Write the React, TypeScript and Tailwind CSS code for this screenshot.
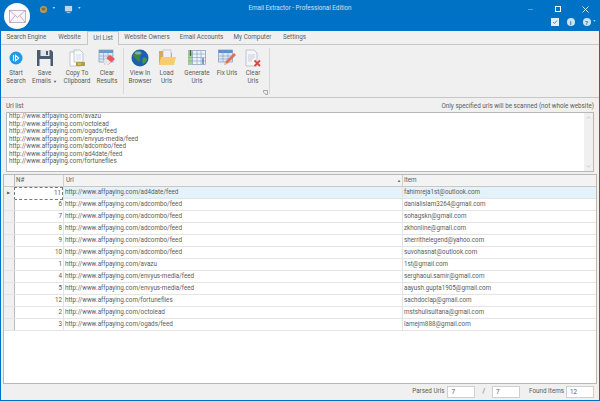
import React from "react";

const TABS = [
  { label: "Search Engine", w: "w-[51px]" },
  { label: "Website", w: "w-[35px]" },
  { label: "Url List", w: "w-[32px]", active: true },
  { label: "Website Owners", w: "w-[56px]" },
  { label: "Email Accounts", w: "w-[53px]" },
  { label: "My Computer", w: "w-[49px]" },
  { label: "Settings", w: "w-[35px]" },
];

const URLS = ["avazu", "octolead", "ogads/feed", "envyus-media/feed", "adcombo/feed", "ad4date/feed", "fortuneflies"];

const ROWS: [number, string, string][] = [
  [11, "ad4date/feed", "fahimreja1st@outlook.com"],
  [6, "adcombo/feed", "danialislam3264@gmail.com"],
  [7, "adcombo/feed", "sohagskn@gmail.com"],
  [8, "adcombo/feed", "zkhonline@gmail.com"],
  [9, "adcombo/feed", "sherrithelegend@yahoo.com"],
  [10, "adcombo/feed", "suvohasnat@outlook.com"],
  [1, "avazu", "1st@gmail.com"],
  [4, "envyus-media/feed", "serghaoui.samir@gmail.com"],
  [5, "envyus-media/feed", "aayush.gupta1905@gmail.com"],
  [12, "fortuneflies", "sachdoclap@gmail.com"],
  [2, "octolead", "mstshulisultana@gmail.com"],
  [3, "ogads/feed", "lamejm888@gmail.com"],
];

function StartIcon() {
  return (
    <svg viewBox="0 0 18 18" className="h-[18px] w-[18px]">
      <circle cx="9" cy="9" r="6.500" fill="#1e9be6" />
      <path d="M6.500 6v6M8.500 6.300l3.200 2.700-3.200 2.700z" stroke="#fff" strokeWidth="1.100" fill="none" />
    </svg>
  );
}

function SaveIcon() {
  return (
    <svg viewBox="0 0 18 18" className="h-[18px] w-[18px]">
      <path d="M1 1h14l2 2v14H1z" fill="#4a5a70" />
      <rect x="4.500" y="1" width="9" height="6" fill="#dfe4ea" />
      <rect x="10" y="2" width="2" height="4" fill="#4a5a70" />
      <rect x="3.500" y="10" width="11" height="7" fill="#eef0f3" />
    </svg>
  );
}

function CopyIcon() {
  return (
    <svg viewBox="0 0 18 18" className="h-[18px] w-[18px]">
      <path d="M2 3h8l3 3v11H2z" fill="#fff" stroke="#a9b4c0" strokeWidth=".7" />
      <path d="M6 1h6l3 3v9H6z" fill="#f6f8fa" stroke="#a9b4c0" strokeWidth=".7" />
      <path d="M8 6h5M8 8h5M8 10h5" stroke="#c6d2de" strokeWidth=".7" />
      <rect x="8" y="13" width="9" height="4" fill="#a9a24a" />
      <rect x="10" y="14" width="3" height="2" fill="#e8b93a" />
    </svg>
  );
}

function ClearResultsIcon() {
  return (
    <svg viewBox="0 0 18 18" className="h-[18px] w-[18px]">
      <rect x="1" y="1" width="14" height="12" fill="#dbe8f5" stroke="#7d9cc0" strokeWidth=".7" />
      <rect x="1" y="1" width="14" height="3" fill="#6f97c8" />
      <path d="M5.500 1v12M10 1v12M1 7h14M1 10h14" stroke="#7d9cc0" strokeWidth=".6" />
      <path d="M5 12l7-6 5 4-7 6H7z" fill="#e8565a" />
      <path d="M5 12l3-3 5 4-3 3H7z" fill="#e6e6ea" />
    </svg>
  );
}

function GlobeIcon() {
  return (
    <svg viewBox="0 0 18 18" className="h-[18px] w-[18px]">
      <circle cx="9" cy="9" r="8.500" fill="#1c5fb0" />
      <path d="M5 2c3-1 5 0 6 2 0 2-2 2-2 4 0 2 1 3-1 5-2-1-2-3-4-4-2-1-2-3-2-3z" fill="#3b8a3c" />
      <path d="M12 9c2-1 3 0 4 1-1 3-2 4-4 5-1-2-1-4 0-6z" fill="#4a983e" />
      <ellipse cx="7" cy="4" rx="3" ry="1.500" fill="#8fc2ee" opacity=".7" />
    </svg>
  );
}

function FolderIcon() {
  return (
    <svg viewBox="0 0 18 18" className="h-[18px] w-[18px]">
      <path d="M1 2h6l1 2h6v12H1z" fill="#e0a84a" />
      <rect x="5" y="1" width="8" height="9" fill="#eef1f5" stroke="#a9b4c0" strokeWidth=".6" />
      <path d="M1 16l2-8h15l-2 8z" fill="#f6cd72" />
    </svg>
  );
}

function GenerateIcon() {
  return (
    <svg viewBox="0 0 18 18" className="h-[18px] w-[18px]">
      <rect x=".5" y="1.500" width="17" height="14" fill="#eef3f9" stroke="#7d9cc0" strokeWidth=".7" />
      <rect x=".5" y="1.500" width="4" height="14" fill="#a9cf8e" />
      <path d="M4.500 1.500v14M9 1.500v14M13 1.500v14M.5 5h17M.5 8.500h17M.5 12h17" stroke="#7d9cc0" strokeWidth=".6" />
      <path d="M2.500 1v6" stroke="#2f6b2f" strokeWidth="1.200" />
      <path d="M15 9v6" stroke="#2b6cb0" strokeWidth="1.200" />
    </svg>
  );
}

function FixIcon() {
  return (
    <svg viewBox="0 0 18 18" className="h-[18px] w-[18px]">
      <rect x=".5" y="1" width="14" height="12" fill="#dbe8f5" stroke="#7d9cc0" strokeWidth=".7" />
      <rect x=".5" y="1" width="14" height="3" fill="#5f8fc8" />
      <path d="M5 1v12M10 1v12M.5 7h14M.5 10h14" stroke="#7d9cc0" strokeWidth=".6" />
      <path d="M6 16l1-3 9-9 2 2-9 9z" fill="#e0705a" />
      <path d="M6 16l1-3 2 2z" fill="#f2d2a8" />
    </svg>
  );
}

function ClearUrlsIcon() {
  return (
    <svg viewBox="0 0 18 18" className="h-[18px] w-[18px]">
      <path d="M2 1h8l3 3v13H2z" fill="#f4f6f8" stroke="#a9b4c0" strokeWidth=".7" />
      <path d="M4 6h7M4 8h7M4 10h5M4 12h4" stroke="#c0c8d2" strokeWidth=".8" />
      <path d="M10.500 11.500l5.500 5.500M16 11.500L10.500 17" stroke="#d8493f" strokeWidth="1.800" />
    </svg>
  );
}

function RibbonButton({ icon, lines, w, caret }: { icon: React.ReactNode; lines: string[]; w: string; caret?: boolean }) {
  return (
    <div className={`flex flex-col items-center pt-[4px] leading-[7.500px] ${w}`}>
      {icon}
      <div className="mt-[3px] whitespace-nowrap text-center">
        <div>{lines[0]}</div>
        <div>
          {lines[1]}
          {caret && <span className="ml-[2px] align-middle text-[4px]">▼</span>}
        </div>
      </div>
    </div>
  );
}

export default function App() {
  return (
    <div className="flex h-[401px] w-[600px] flex-col overflow-hidden bg-[#f0f0f0] font-['Roboto',sans-serif] text-[6.300px] text-[#5c5c5c]">
      {/* logo hangs over the title bar edge */}
      <div className="absolute left-[4px] top-[3px] flex h-[26px] w-[26px] items-center justify-center rounded-full bg-white">
        <svg viewBox="0 0 18 14" className="h-[13px] w-[17px]">
          <rect x=".5" y=".5" width="17" height="13" fill="#fbf4fa" stroke="#a58bb0" strokeWidth=".7" />
          <path d="M.5.5L9 8l8.500-7.500M.5 13.500L6.500 6M17.500 13.500L11.500 6" stroke="#a58bb0" strokeWidth=".7" fill="none" />
        </svg>
      </div>

      <div className="h-[31px] shrink-0 bg-[#0072c6]">
        <div className="grid h-[18px] grid-cols-[1fr_auto_1fr] items-center text-[#cfe3f4]">
          <div className="flex items-center pl-[39px]">
            <svg viewBox="0 0 10 10" className="h-[9px] w-[9px]">
              <circle cx="5" cy="5" r="4" fill="#b89a5c" />
              <rect x="3" y="3" width="4" height="3" fill="#8e6a30" />
            </svg>
            <span className="ml-[4px] text-[3.500px]">▼</span>
            <svg viewBox="0 0 10 10" className="ml-[9px] h-[9px] w-[9px]">
              <rect x="1" y="1" width="8" height="6" fill="#bcd6ea" />
              <rect x="3" y="8" width="4" height="1" fill="#bcd6ea" />
            </svg>
            <span className="ml-[4px] text-[3.500px]">▼</span>
          </div>
          <div>Email Extractor - Professional Edition</div>
          <div className="flex items-center justify-end pr-[11px]">
            <div className="h-[1px] w-[5px] bg-[#5c9fd8]" />
            <div className="ml-[22px] h-[6px] w-[6px] border border-white" />
            <svg viewBox="0 0 7 7" className="ml-[21px] h-[7px] w-[7px]">
              <path d="M.5.5l6 6M6.500.500l-6 6" stroke="#fff" strokeWidth=".8" />
            </svg>
          </div>
        </div>
        <div className="flex h-[13px] items-start justify-end gap-[8px] pr-[4px]">
          <svg viewBox="0 0 8 8" className="h-[8px] w-[8px]">
            <rect width="8" height="8" fill="#e4eef6" />
            <path d="M2 4l1.500 1.500L6 2.500" stroke="#3c8ccc" fill="none" />
          </svg>
          <div className="flex h-[8px] w-[8px] items-center justify-center rounded-full bg-[#cfe2f0] text-[6px] font-bold text-[#0072c6]">i</div>
          <div className="flex items-center gap-[2px]">
            <div className="flex h-[8px] w-[8px] items-center justify-center rounded-full bg-[#cfe2f0] text-[6px] font-bold text-[#0072c6]">?</div>
            <span className="text-[3.500px] text-[#b5d3ea]">▼</span>
          </div>
        </div>
      </div>

      <div className="flex min-h-0 flex-1 flex-col border-x-[1px] border-b-[1px] border-[#0072c6]">
        <div className="flex h-[13px] shrink-0 items-end bg-[#f0f0f0]">
          {TABS.map((t) => (
            <div
              key={t.label}
              className={`flex items-center justify-center whitespace-nowrap ${t.w} ${t.active ? "relative z-10 -mb-[1px] h-[14px] border-x border-t border-[#c6c6c6] bg-[#f0f0f0]" : "h-[13px]"}`}
            >
              {t.label}
            </div>
          ))}
        </div>

        <div className="flex h-[54px] shrink-0 border-y border-[#c6c6c6] bg-[#f0f0f0] pl-[1px]">
          <RibbonButton icon={<StartIcon />} lines={["Start", "Search"]} w="w-[28px]" />
          <RibbonButton icon={<SaveIcon />} lines={["Save", "Emails"]} w="w-[29px]" caret />
          <RibbonButton icon={<CopyIcon />} lines={["Copy To", "Clipboard"]} w="w-[36px]" />
          <RibbonButton icon={<ClearResultsIcon />} lines={["Clear", "Results"]} w="w-[24px]" />
          <div className="mx-[4px] my-[3px] w-[1px] bg-[#d8d8d8]" />
          <RibbonButton icon={<GlobeIcon />} lines={["View In", "Browser"]} w="w-[24px]" />
          <RibbonButton icon={<FolderIcon />} lines={["Load", "Urls"]} w="w-[29px]" />
          <RibbonButton icon={<GenerateIcon />} lines={["Generate", "Urls"]} w="w-[32px]" />
          <RibbonButton icon={<FixIcon />} lines={["Fix Urls", ""]} w="w-[28px]" />
          <RibbonButton icon={<ClearUrlsIcon />} lines={["Clear", "Urls"]} w="w-[24px]" />
          <div className="flex w-[4px] items-end pb-[2px]">
            <svg viewBox="0 0 5 5" className="-ml-[2px] h-[5px] w-[5px] shrink-0">
              <path d="M.5 2.500V.5h4v4h-2M1 2.500l2 2" stroke="#777" strokeWidth=".6" fill="none" />
            </svg>
          </div>
          <div className="my-[3px] w-[1px] bg-[#d8d8d8]" />
        </div>

        <div className="flex h-[14px] shrink-0 items-end justify-between px-[5px] pb-[1px]">
          <span>Url list</span>
          <span>Only specified urls will be scanned (not whole website)</span>
        </div>

        <div className="mx-[5px] flex h-[60px] shrink-0 border border-[#b8b8b8] bg-white">
          <div className="flex-1 pl-[2px] leading-[7.500px]">
            {URLS.map((u) => (
              <div key={u}>http://www.affpaying.com/{u}</div>
            ))}
          </div>
          <div className="flex w-[9px] flex-col items-center justify-between bg-[#f0f0f0] py-[3px]">
            <svg viewBox="0 0 6 4" className="h-[3px] w-[5px]">
              <path d="M.5 3.500L3 1l2.500 2.500" stroke="#b0b0b0" strokeWidth=".8" fill="none" />
            </svg>
            <svg viewBox="0 0 6 4" className="h-[3px] w-[5px]">
              <path d="M.5.5L3 3l2.500-2.500" stroke="#b0b0b0" strokeWidth=".8" fill="none" />
            </svg>
          </div>
        </div>

        <div className="mx-[2px] mt-[2px] flex min-h-0 flex-1 flex-col border border-[#b8b8b8] bg-white">
          <div className="grid h-[12px] shrink-0 grid-cols-[10px_49px_339px_1fr] items-center border-b border-[#c8c8c8] bg-[#f3f3f3] leading-[11px]">
            <div />
            <div className="h-full border-l border-[#bbb] pl-[1px]">N#</div>
            <div className="flex h-full items-center justify-between border-l border-[#d0d0d0] pl-[2px] pr-[1px]">
              <span>Url</span>
              <span className="text-[4px]">▲</span>
            </div>
            <div className="h-full border-l border-[#d0d0d0] pl-[1px]">Item</div>
          </div>
          {ROWS.map(([n, path, mail], i) => (
            <div
              key={n}
              className={`grid h-[12px] shrink-0 grid-cols-[10px_49px_339px_1fr] items-center border-b border-[#e4e4e4] ${i === 0 ? "bg-[#e3f2fb]" : ""}`}
            >
              <div className="h-full bg-[#f0f0f0] pl-[3px] text-[4px] leading-[12px]">{i === 0 ? "▶" : ""}</div>
              <div className={`h-full pr-[1px] text-right leading-[11px] ${i === 0 ? "border border-dashed border-[#777] bg-white" : "border-l border-[#bbb]"}`}>{n}</div>
              <div className="h-full border-l border-[#e4e4e4] pl-[1px] leading-[11px]">http://www.affpaying.com/{path}</div>
              <div className="h-full border-l border-[#e4e4e4] pl-[1px] leading-[11px]">{mail}</div>
            </div>
          ))}
        </div>

        <div className="flex h-[16px] shrink-0 items-center justify-end pr-[5px]">
          <span>Parsed Urls</span>
          <div className="ml-[3px] h-[12px] w-[28px] border border-[#d0d0d0] bg-white pl-[3px] leading-[10px]">7</div>
          <span className="mx-[7px]">/</span>
          <div className="h-[12px] w-[28px] border border-[#d0d0d0] bg-white pl-[3px] leading-[10px]">7</div>
          <span className="ml-[9px]">Found Items</span>
          <div className="ml-[2px] h-[12px] w-[28px] border border-[#d0d0d0] bg-white pl-[3px] leading-[10px]">12</div>
        </div>
      </div>
    </div>
  );
}
